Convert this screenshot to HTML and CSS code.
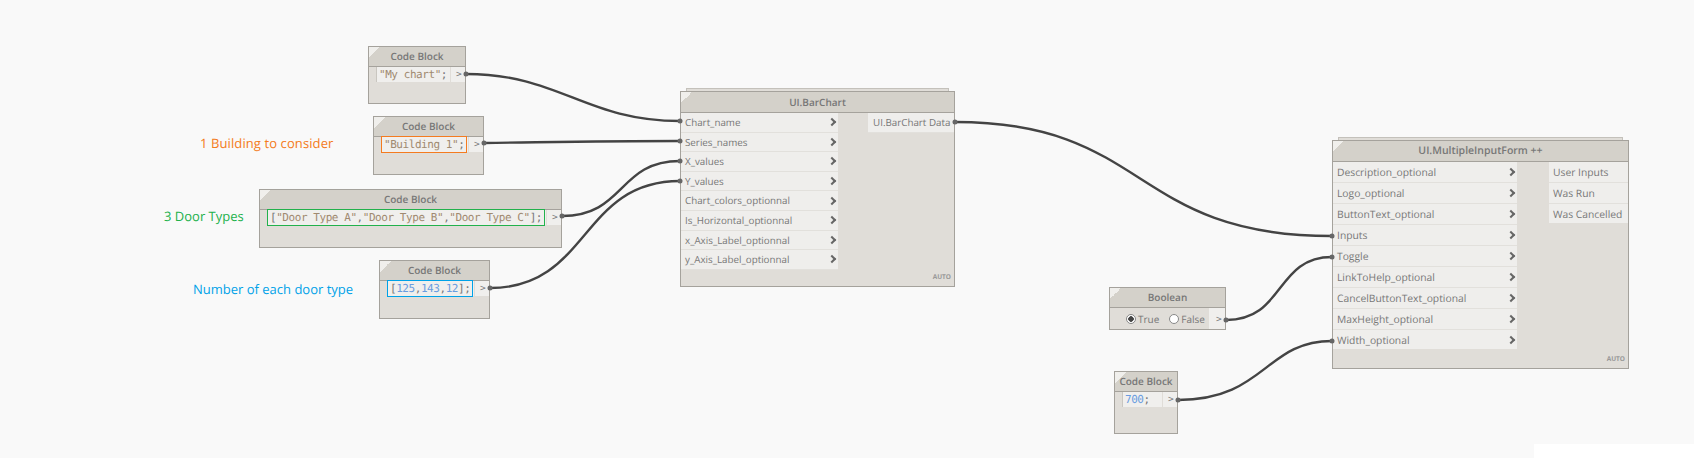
FILE: index.html
```html
<!DOCTYPE html>
<html lang="en">
<head>
    <meta charset="UTF-8">
    <title>Dynamo graph</title>
    <link rel="stylesheet" href="styles.css">
</head>
<body>
    <div class="canvas">
        <div class="note note-building">1 Building to consider</div>
        <div class="note note-doors">3 Door Types</div>
        <div class="note note-count">Number of each door type</div>

        <div class="node code-chart">
            <div class="node-title">Code Block</div>
            <div class="code-row">
                <div class="code-cell"><span class="code-text"><span class="str">"My chart"</span>;</span></div>
                <div class="out-chip">&gt;</div>
            </div>
        </div>

        <div class="node code-building">
            <div class="node-title">Code Block</div>
            <div class="code-row">
                <div class="code-cell"><span class="code-text mark-orange"><span class="str">"Building 1"</span>;</span></div>
                <div class="out-chip">&gt;</div>
            </div>
        </div>

        <div class="node code-doors">
            <div class="node-title">Code Block</div>
            <div class="code-row">
                <div class="code-cell"><span class="code-text mark-green">[<span class="str">"Door Type A"</span>,<span class="str">"Door Type B"</span>,<span class="str">"Door Type C"</span>];</span></div>
                <div class="out-chip">&gt;</div>
            </div>
        </div>

        <div class="node code-count">
            <div class="node-title">Code Block</div>
            <div class="code-row">
                <div class="code-cell"><span class="code-text mark-blue">[<span class="num">125</span>,<span class="num">143</span>,<span class="num">12</span>];</span></div>
                <div class="out-chip">&gt;</div>
            </div>
        </div>

        <div class="node stacked barchart">
            <div class="node-title">UI.BarChart</div>
            <div class="node-body">
                <div class="inputs">
                    <div class="in-row">Chart_name</div>
                    <div class="in-row">Series_names</div>
                    <div class="in-row">X_values</div>
                    <div class="in-row">Y_values</div>
                    <div class="in-row">Chart_colors_optionnal</div>
                    <div class="in-row">Is_Horizontal_optionnal</div>
                    <div class="in-row">x_Axis_Label_optionnal</div>
                    <div class="in-row">y_Axis_Label_optionnal</div>
                </div>
                <div class="outputs">
                    <div class="out-row">UI.BarChart Data</div>
                </div>
            </div>
            <div class="auto">AUTO</div>
        </div>

        <div class="node stacked inputform">
            <div class="node-title">UI.MultipleInputForm ++</div>
            <div class="node-body">
                <div class="inputs">
                    <div class="in-row">Description_optional</div>
                    <div class="in-row">Logo_optional</div>
                    <div class="in-row">ButtonText_optional</div>
                    <div class="in-row">Inputs</div>
                    <div class="in-row">Toggle</div>
                    <div class="in-row">LinkToHelp_optional</div>
                    <div class="in-row">CancelButtonText_optional</div>
                    <div class="in-row">MaxHeight_optional</div>
                    <div class="in-row">Width_optional</div>
                </div>
                <div class="outputs">
                    <div class="out-row">User Inputs</div>
                    <div class="out-row">Was Run</div>
                    <div class="out-row">Was Cancelled</div>
                </div>
            </div>
            <div class="auto">AUTO</div>
        </div>

        <div class="node boolean">
            <div class="node-title">Boolean</div>
            <div class="bool-row">
                <div class="bool-options">
                    <span class="radio checked"></span><span class="radio-label">True</span>
                    <span class="radio"></span><span class="radio-label">False</span>
                </div>
                <div class="out-chip">&gt;</div>
            </div>
        </div>

        <div class="node code-width">
            <div class="node-title">Code Block</div>
            <div class="code-row">
                <div class="code-cell"><span class="code-text"><span class="num">700</span>;</span></div>
                <div class="out-chip">&gt;</div>
            </div>
        </div>

        <svg class="wires" width="1694" height="458" viewBox="0 0 1694 458">
            <g class="wire">
                <path d="M466 74 C 560 74, 585 121, 680 121"/>
                <path d="M484 143 C 560 142, 600 141, 680 141"/>
                <path d="M562 216 C 625 216, 618 161, 680 161"/>
                <path d="M490 288 C 590 288, 580 181, 680 181"/>
                <path d="M955 122 C 1150 122, 1130 236, 1332 236"/>
                <path d="M1226 320 C 1285 320, 1275 257, 1332 257"/>
                <path d="M1178 400 C 1265 400, 1265 341, 1332 341"/>
            </g>
            <g class="port">
                <circle cx="466" cy="74" r="2.5"/>
                <circle cx="484" cy="143" r="2.5"/>
                <circle cx="562" cy="216" r="2.5"/>
                <circle cx="490" cy="288" r="2.5"/>
                <circle cx="680" cy="121" r="2.5"/>
                <circle cx="680" cy="141" r="2.5"/>
                <circle cx="680" cy="161" r="2.5"/>
                <circle cx="680" cy="181" r="2.5"/>
                <circle cx="955" cy="122" r="2.5"/>
                <circle cx="1332" cy="236" r="2.5"/>
                <circle cx="1332" cy="257" r="2.5"/>
                <circle cx="1332" cy="341" r="2.5"/>
                <circle cx="1226" cy="320" r="2.5"/>
                <circle cx="1178" cy="400" r="2.5"/>
            </g>
        </svg>

        <div class="corner-patch"></div>
    </div>
</body>
</html>
```

FILE: styles.css
```css
html, body {
    margin: 0;
    padding: 0;
    background: #f9f9f9;
}

.canvas {
    position: relative;
    width: 1694px;
    height: 458px;
    overflow: hidden;
    background: #f9f9f9;
    font-family: "Open Sans", sans-serif;
    font-size: 10.3px;
    color: #777;
    text-rendering: geometricPrecision;
}

.corner-patch {
    position: absolute;
    left: 1534px;
    top: 444px;
    width: 160px;
    height: 14px;
    background: #fff;
}

/* annotations */
.note {
    position: absolute;
    font-size: 13px;
    line-height: 18px;
    white-space: nowrap;
}

.note-building {
    left: 200px;
    top: 134px;
    color: #f47b20;
    letter-spacing: 0.1px;
}

.note-doors {
    left: 164px;
    top: 207px;
    color: #22b14c;
}

.note-count {
    left: 193px;
    top: 280px;
    color: #00a2e8;
}

/* nodes */
.node {
    position: absolute;
    box-sizing: border-box;
    border: 1px solid #a5a29c;
    background: #e0ddd8;
}

.node::before {
    content: "";
    position: absolute;
    left: 0;
    top: 0;
    width: 11px;
    height: 11px;
    background: linear-gradient(135deg, #f0efec 50%, transparent 50%);
}

.stacked::after {
    content: "";
    position: absolute;
    left: 5px;
    right: 5px;
    top: -4px;
    height: 2px;
    border: 1px solid #c4c1bb;
    border-bottom: none;
    background: #e0ddd8;
}

.node-title {
    box-sizing: border-box;
    height: 20px;
    line-height: 19px;
    text-align: center;
    font-size: 10px;
    font-weight: 600;
    background: #d4d1ca;
    border-bottom: 1px solid #a5a29c;
}

.barchart .node-title,
.inputform .node-title {
    height: 21px;
    line-height: 20px;
}

.inputform .node-title {
    font-size: 10.5px;
}

.code-chart {
    left: 368px;
    top: 46px;
    width: 98px;
    height: 58px;
}

.code-building {
    left: 373px;
    top: 116px;
    width: 111px;
    height: 59px;
}

.code-doors {
    left: 259px;
    top: 189px;
    width: 303px;
    height: 59px;
}

.code-count {
    left: 379px;
    top: 260px;
    width: 111px;
    height: 59px;
}

.code-width {
    left: 1114px;
    top: 371px;
    width: 64px;
    height: 63px;
}

.barchart {
    left: 680px;
    top: 91px;
    width: 275px;
    height: 196px;
    font-size: 9.8px;
}

.inputform {
    left: 1332px;
    top: 140px;
    width: 297px;
    height: 229px;
}

.boolean {
    left: 1109px;
    top: 287px;
    width: 117px;
    height: 43px;
}

/* code block rows */
.code-row {
    display: flex;
    height: 15px;
    padding-left: 7px;
}

.code-cell {
    flex: 1;
    min-width: 0;
    padding-left: 2px;
    background: #f0efed;
    border-left: 1px solid #c9c6c0;
    font-family: "DejaVu Sans Mono", monospace;
    font-size: 11px;
    letter-spacing: -0.44px;
    line-height: 15px;
    color: #777;
    white-space: nowrap;
}

.str {
    color: #a08a70;
}

.num {
    color: #6a9ce0;
}

.code-text {
    display: inline-block;
    height: 15px;
}

.mark-orange,
.mark-green,
.mark-blue {
    margin-left: -2px;
    padding: 0 2px;
}

.mark-orange {
    outline: 1.5px solid #f47b20;
}

.mark-green {
    outline: 1.5px solid #22b14c;
}

.mark-blue {
    outline: 1.5px solid #00a2e8;
}

.out-chip {
    flex: none;
    width: 14px;
    margin-left: 1px;
    padding-left: 5px;
    box-sizing: border-box;
    background: #f0efed;
    font-family: "DejaVu Sans Mono", monospace;
    font-size: 9.5px;
    line-height: 15px;
    color: #777;
}

/* input / output ports */
.node-body {
    display: flex;
    justify-content: space-between;
    align-items: flex-start;
}

.barchart .inputs {
    width: 157px;
}

.barchart .outputs {
    width: 86px;
}

.inputform .inputs {
    width: 184px;
}

.inputform .outputs {
    width: 79px;
}

.in-row,
.out-row {
    box-sizing: border-box;
    background: #efeeec;
    border-bottom: 1px solid #e2e0dc;
    padding-left: 4px;
    white-space: nowrap;
}

.barchart .out-row {
    padding-left: 5px;
}

.in-row {
    position: relative;
}

/* the chevron at the end of an input row */
.in-row::after {
    content: "";
    position: absolute;
    right: 3px;
    top: 50%;
    width: 4px;
    height: 4px;
    margin-top: -3px;
    border-top: 2px solid #666;
    border-right: 2px solid #666;
    transform: rotate(45deg);
}

.barchart .in-row,
.barchart .out-row {
    height: 19.6px;
    line-height: 19px;
}

.inputform .in-row,
.inputform .out-row {
    height: 21px;
    line-height: 22px;
}

.inputform .in-row:last-child,
.inputform .out-row:last-child {
    height: 19px;
    border-bottom: none;
}

.auto {
    position: absolute;
    right: 3px;
    bottom: 5px;
    font-size: 6.5px;
    line-height: 8px;
    font-weight: 700;
    color: #999;
}

/* boolean toggle */
.bool-row {
    display: flex;
    height: 21px;
}

.bool-options {
    flex: 1;
    min-width: 0;
    display: flex;
    align-items: center;
    padding-left: 16px;
    font-size: 10px;
}

.radio {
    box-sizing: border-box;
    flex: none;
    width: 10px;
    height: 10px;
    border: 1px solid #888;
    border-radius: 50%;
    background: #fff;
}

.radio.checked {
    background: radial-gradient(circle, #444 0 2.5px, #fff 3px);
}

.radio-label {
    margin-left: 2px;
    margin-right: 10px;
}

.radio-label:last-child {
    margin-right: 0;
}

.bool-row .out-chip {
    width: 16px;
    margin-left: 0;
    padding-left: 7px;
    line-height: 23px;
}

/* wires */
.wires {
    position: absolute;
    left: 0;
    top: 0;
    pointer-events: none;
}

.wire path {
    fill: none;
    stroke: #444;
    stroke-width: 2.4;
}

.port circle {
    fill: #666;
}
```
